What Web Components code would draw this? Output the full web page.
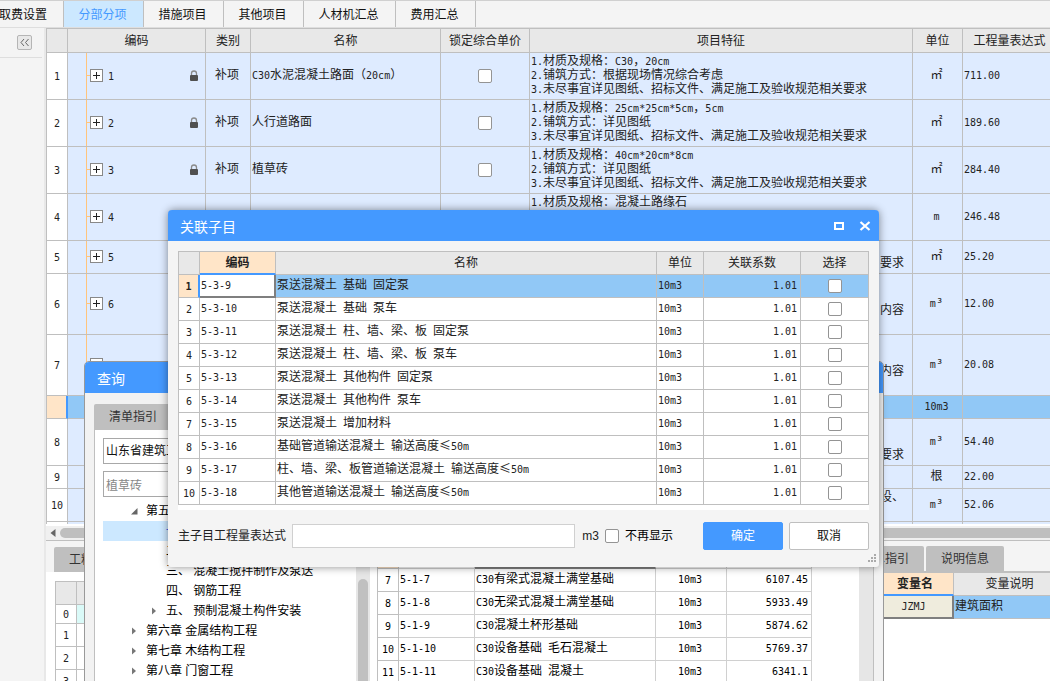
<!DOCTYPE html>
<html lang="zh-CN">
<head>
<meta charset="utf-8">
<meta name="viewport" content="width=device-width, initial-scale=1">
<title>工程计价 - 分部分项</title>
<style>
html, body { margin: 0; height: 100%; overflow: hidden; }
body {
  font-family: "Liberation Sans", "Noto Sans CJK SC", sans-serif;
  font-size: 12px; line-height: 14px; color: #222; background: #f4f4f4;
  --accent: #4499ff; --line: #bfbfbf; --head: #e8e8e8; --current: #ffe5c8;
  --picked: #91c8f6; --tint: #deebff; --surface: #f4f4f4;
}
</style>
</head>
<body>
<app-shell>
  <app-tabs slot="tabs"></app-tabs>
  <side-rail slot="rail"></side-rail>
  <bill-grid slot="grid"></bill-grid>
  <detail-pane slot="detail"></detail-pane>
  <resource-pane slot="resource"></resource-pane>
  <window-frame slot="windows" class="query" heading="查询"><guide-query></guide-query></window-frame>
  <window-frame slot="windows" class="linked" heading="关联子目" controls><linked-items></linked-items></window-frame>
</app-shell>

<script>
/* Styles shared by every data grid and form control. */
const BASE = `
:host, *, *::before, *::after { box-sizing: border-box; }
button, input, select { font: inherit; color: inherit; margin: 0; }
button { border: 0; background: none; padding: 0; }
table { border-collapse: separate; border-spacing: 0; table-layout: fixed; width: 100%;
  font-family: "DejaVu Sans Mono", "Noto Sans CJK SC", monospace; }
td, th { height: 23px; padding: 0 2px; border: 0 solid var(--line); border-width: 0 1px 1px 0;
  font-weight: 400; text-align: left; white-space: nowrap; overflow: hidden; vertical-align: middle; }
td { padding: 0 3px 2px 1px; }
td:has(input) { padding: 0; }
thead th { background: var(--head); text-align: center; }
tbody th { background: #fff; text-align: center; padding: 0; }
.c { text-align: center; } .r { text-align: right; }
.n { font-family: "DejaVu Sans Mono", monospace; font-size: 10px; line-height: 10px; }
.w { font-family: "Noto Sans CJK SC", sans-serif; line-height: 10px; }
.current { background: var(--current); font-weight: 700; }
input[type=checkbox] { appearance: none; display: block; width: 14px; height: 14px; margin: 0 auto;
  border: 1px solid #949494; border-radius: 2px; background: #fff; }
.tab { height: 25px; width: 78px; background: var(--line); color: #333; border-radius: 2px 2px 0 0; text-align: center; }
`;

/* Latin runs are set in the narrow grid face beside 12px Han characters; ≤ keeps its full Han width. */
const t = s => String(s).replace(/[\x20-\x7e]+/g, m => `<span class="n">${m}</span>`).replace(/≤/g, '<span class="w">≤</span>');
const cols = list => `<colgroup>${list.map(w => `<col${w ? ` style="width:${w}px"` : ''}>`).join('')}</colgroup>`;

const define = (name, css, markup) => customElements.define(name, class extends HTMLElement {
  connectedCallback() {
    if (this.shadowRoot) return;
    this.attachShadow({ mode: 'open' }).innerHTML =
      `<style>${BASE}${css}</style>${typeof markup === 'function' ? markup(this) : markup}`;
  }
});

define('app-shell', `
:host { display: flex; flex-direction: column; height: 100vh; position: relative; overflow: hidden; }
.body { flex: 1; display: flex; min-height: 0; }
main { flex: 1; min-width: 0; display: flex; flex-direction: column; }
.bottom { height: 140px; flex: none; display: flex; }
::slotted(bill-grid) { flex: 1; min-height: 0; }
::slotted(detail-pane) { flex: 1; min-width: 0; }
::slotted(resource-pane) { flex: none; width: 204px; }
::slotted(.query) { position: absolute; left: 84px; top: 361px; width: 800px; bottom: -40px; }
::slotted(.linked) { position: absolute; left: 168px; top: 210px; width: 711px; }
`, `<slot name="tabs"></slot>
<div class="body"><slot name="rail"></slot>
<main><slot name="grid"></slot><div class="bottom"><slot name="detail"></slot><slot name="resource"></slot></div></main></div>
<slot name="windows"></slot>`);

define('app-tabs', `
:host { display: block; border-top: 1px solid #d0d0d0; border-bottom: 1px solid #dedede; }
nav { display: flex; height: 26px; }
button { width: 80px; border-right: 1px solid var(--line); color: #111; padding: 2px 2px 0 0; white-space: nowrap; }
button.first { width: 64px; display: flex; align-items: center; justify-content: flex-end; padding-right: 16px; }
button.wide { width: 92px; }
button.on { background: #cce8ff; color: var(--accent); padding: 1px 2px 0 0; }
`, `<nav><button class="first">取费设置</button><button class="on" aria-current="page">分部分项</button><button>措施项目</button><button>其他项目</button><button class="wide">人材机汇总</button><button>费用汇总</button></nav>`);

define('side-rail', `
:host { display: flex; flex: none; width: 46px; border-right: 2px solid #e8e8e8; }
div { width: 42px; height: 30px; border-bottom: 1px solid #dedede; padding: 7px 0 0 17px; }
button { display: block; width: 15px; height: 15px; border: 1px solid #b5b5b5; border-radius: 2px; background: var(--head); }
svg { display: block; }
`, `<div><button aria-label="收起"><svg width="13" height="13" fill="none" stroke="#666"><path d="M6 3L3 6.500L6 10M10.500 3L7.500 6.500L10.500 10"/></svg></button></div>`);

const LOCK = `<svg class="lock" width="10" height="12" viewBox="0 0 10 12"><path d="M2.500 6V3.500a2.500 2.500 0 0 1 5 0V6" fill="none" stroke="#8a8a8a" stroke-width="1.300"/><rect x="1" y="5" width="8" height="6" rx="1" fill="#505050"/></svg>`;
const SPEC = '未尽事宜详见图纸、招标文件、满足施工及验收规范相关要求';
const BILL = [
  { no: 1, h: 3, name: 'C30水泥混凝土路面（20cm）', spec: ['1.材质及规格：C30，20cm', '2.铺筑方式：根据现场情况综合考虑', '3.' + SPEC], unit: '㎡', qty: '711.00' },
  { no: 2, h: 3, name: '人行道路面', spec: ['1.材质及规格：25cm*25cm*5cm，5cm', '2.铺筑方式：详见图纸', '3.' + SPEC], unit: '㎡', qty: '189.60' },
  { no: 3, h: 3, name: '植草砖', spec: ['1.材质及规格：40cm*20cm*8cm', '2.铺筑方式：详见图纸', '3.' + SPEC], unit: '㎡', qty: '284.40' },
  { no: 4, h: 3, spec: ['1.材质及规格：混凝土路缘石', '', ''], unit: 'm', qty: '246.48' },
  { no: 5, h: 2, tail: ['', '要求'], unit: '㎡', qty: '25.20' },
  { no: 6, h: 4, tail: ['', '', '内容', ''], unit: 'm³', qty: '12.00' },
  { no: 7, h: 4, tail: ['', '', '内容', ''], unit: 'm³', qty: '20.08' },
  { no: '', h: 1, unit: '10m3', qty: '' },
  { no: 8, h: 3, tail: ['', '', '要求'], unit: 'm³', qty: '54.40' },
  { no: 9, h: 1, unit: '根', qty: '22.00' },
  { no: 10, h: 2, tail: ['设、', ''], unit: 'm³', qty: '52.06' },
  { no: '', h: 2, unit: '', qty: '', rest: true }
];
const billRow = b => {
  const lines = b.spec || b.tail || [];
  const text = lines.map(l => `<div class="line">${t(l)}</div>`).join('');
  const picked = !b.no && !b.rest;
  return `<tr class="h${b.h}${picked ? ' picked' : ''}"><th>${t(b.no)}</th>
<td class="code">${b.no ? `<div class="node"><i></i><button aria-label="展开"><svg width="11" height="11" stroke="#222"><path d="M2 5.500H9M5.500 2V9"/></svg></button><span>${t(b.no)}</span>${LOCK}</div>` : ''}</td>
<td class="c">${b.name ? '补项' : ''}</td><td>${b.name ? t(b.name) : ''}</td>
<td>${b.name ? `<input type="checkbox" aria-label="锁定综合单价 ${b.no}">` : ''}</td>
<td class="${b.tail ? 'tail' : ''}">${text}</td><td class="c">${t(b.unit)}</td><td>${t(b.qty)}</td></tr>`;
};
define('bill-grid', `
:host { display: flex; flex-direction: column; background: #fff; }
.view { flex: 1; min-height: 0; overflow: hidden; border: solid var(--line); border-width: 1px 0 0 1px; margin-bottom: 2px; }
table { width: calc(100% + 7px); }
thead th { height: 24px; }
td { background: var(--tint); }
.h1 > * { height: 23px; } .h2 > * { height: 33px; } .h3 > * { height: 47px; } .h4 > * { height: 61px; }
.line { height: 14px; }
td.tail { text-align: right; padding-right: 8px; }
.picked td { background: var(--picked); }
.picked th { background: var(--current); border-right: 2px solid var(--accent); }
td.code { padding: 0 6px 1px 18px; background: linear-gradient(#ffc47c, #ffc47c) 18px 0 / 1px 100% no-repeat var(--tint); }
.picked td.code { background: var(--picked); }
.node { display: flex; align-items: center; }
.node i { width: 4px; height: 1px; background: #ffc47c; }
.node button { width: 13px; height: 13px; border: 1px solid #888; background: #fff; margin-right: 5px; }
.node button svg { display: block; }
.lock { margin-left: auto; display: block; }
.bar { height: 14px; flex: none; background: #f0f0f0; display: flex; align-items: center; gap: 4px; padding-left: 4px; }
.bar b { flex: 1; height: 10px; border-radius: 5px 0 0 5px; background: var(--line); }
.bar svg { display: block; }
.edge { height: 1px; flex: none; background: var(--line); }
`, `<div class="view"><table>${cols([21, 138, 45, 190, 89, 0, 50, 94])}
<thead><tr><th></th><th>编码</th><th>类别</th><th>名称</th><th>锁定综合单价</th><th>项目特征</th><th>单位</th><th>工程量表达式</th></tr></thead>
<tbody>${BILL.map(billRow).join('')}</tbody></table></div>
<div class="bar"><svg width="6" height="8" fill="#666"><path d="M5.500 0V8L0.500 4Z"/></svg><b></b></div><div class="edge"></div>`);

define('detail-pane', `
:host { display: flex; flex-direction: column; background: #fff; }
.tabs { background: var(--surface); padding: 6px 0 0 8px; }
.tab { display: block; width: 90px; }
.view { flex: 1; padding: 9px 0 0 9px; overflow: hidden; }
table { border: solid var(--line); border-width: 1px 0 0 1px; }
.zero > * { height: 19px; } .zero td { background: #dafaf8; }
`, `<div class="tabs"><button class="tab">工料机显示</button></div>
<div class="view"><table>${cols([21, 0])}<thead><tr><th></th><th></th></tr></thead><tbody>
<tr class="zero"><th>${t(0)}</th><td></td></tr>${[1, 2, 3].map(n => `<tr><th>${t(n)}</th><td></td></tr>`).join('')}</tbody></table></div>`);

define('resource-pane', `
:host { display: flex; flex-direction: column; background: #fff; }
.tabs { display: flex; gap: 2px; background: var(--surface); padding-top: 5px; border-bottom: 2px solid var(--line); }
.view { flex: 1; overflow: hidden; }
table { width: calc(100% + 16px); }
thead th.current { background: var(--current); border-bottom: 2px solid var(--accent); }
td.name { background: #efecdd; border-right: 2px solid #7f7f7f; border-bottom: 2px solid #7f7f7f; text-align: center; }
td.picked { background: var(--picked); }
`, `<div class="tabs"><button class="tab">清单指引</button><button class="tab">说明信息</button></div>
<div class="view"><table>${cols([31, 77, 0])}<thead><tr><th></th><th class="current">变量名</th><th>变量说明</th></tr></thead>
<tbody><tr><th>${t(1)}</th><td class="name">${t('JZMJ')}</td><td class="picked">建筑面积</td></tr></tbody></table></div>`);

define('window-frame', `
:host { display: flex; flex-direction: column; background: var(--surface); border-radius: 5px 5px 3px 3px; }
:host([controls]) { box-shadow: 0 0 9px rgba(0,0,0,.45); }
:host(:not([controls])) { border: 1px solid #999; }
header { display: flex; align-items: center; flex: none; height: 31px; padding: 2px 8px 0 12px; background: var(--accent);
  color: #fff; border-radius: 4px 4px 0 0; }
h2 { margin: 0 auto 0 0; font-size: 14px; line-height: 20px; font-weight: 400; }
.tools { display: flex; gap: 14px; padding-bottom: 2px; }
button { width: 12px; height: 12px; }
svg { display: block; }
::slotted(*) { flex: 1; min-height: 0; }
`, el => `<header><h2>${el.getAttribute('heading')}</h2>${el.hasAttribute('controls') ? `<div class="tools">
<button aria-label="最大化"><svg width="12" height="12" fill="none" stroke="#fff" stroke-width="2"><path d="M2 3H10V9H2Z"/></svg></button>
<button aria-label="关闭"><svg width="12" height="12" fill="none" stroke="#fff" stroke-width="2.200"><path d="M1.500 2L10.500 10M10.500 2L1.500 10"/></svg></button></div>` : ''}</header><slot></slot>`);

define('chapter-tree', `
:host { display: block; }
ul { list-style: none; margin: 0; padding: 0; color: #000; }
li { display: flex; align-items: center; height: 20px; padding-left: 27px; white-space: nowrap; }
li.sub { padding-left: 47px; }
li.on { background: #cce8ff; color: #4466ee; }
svg { display: block; width: 8px; height: 8px; margin-right: 8px; }
`, () => {
  const closed = '<svg fill="#777"><path d="M2 0.500V7.500L6 4Z"/></svg>', open = '<svg fill="#666"><path d="M7.500 1V7.500H1Z"/></svg>';
  return `<ul>${[
    ['', '第五章 钢筋及混凝土工程', open], ['sub on', '一、', '<svg></svg>'], ['sub', '二、', '<svg></svg>'],
    ['sub', '三、 混凝土搅拌制作及泵送', '<svg></svg>'], ['sub', '四、 钢筋工程', '<svg></svg>'], ['sub', '五、 预制混凝土构件安装', closed],
    ['', '第六章 金属结构工程', closed], ['', '第七章 木结构工程', closed], ['', '第八章 门窗工程', closed]
  ].map(([c, s, i]) => `<li class="${c}">${i}${s}</li>`).join('')}</ul>`;
});

const NORMS = [
  [6, '', '', '', ''], [7, '5-1-7', 'C30有梁式混凝土满堂基础', '10m3', '6107.45'],
  [8, '5-1-8', 'C30无梁式混凝土满堂基础', '10m3', '5933.49'], [9, '5-1-9', 'C30混凝土杯形基础', '10m3', '5874.62'],
  [10, '5-1-10', 'C30设备基础 毛石混凝土', '10m3', '5769.37'], [11, '5-1-11', 'C30设备基础 混凝土', '10m3', '6341.1']
];
define('guide-query', `
:host { display: flex; flex-direction: column; padding: 11px 9px 0; background: #f2f2f2; }
.tab { flex: none; height: 26px; }
.split { flex: 1; min-height: 0; display: flex; background: #fff; border: solid var(--line); border-width: 0 1px 0 1px; }
.left { flex: none; width: 275px; padding: 8px 0 0 8px; display: flex; flex-direction: column; }
select, input { display: block; width: 100%; height: 26px; border: 1px solid #a8a8a8; background: #fff; padding: 0 2px; border-radius: 0; appearance: none; color: #111; flex: none; }
input { margin: 7px 0 4px; color: #888; }
.scroll { flex: 1; min-height: 0; display: flex; overflow: hidden; }
chapter-tree { flex: 1; }
.track { flex: none; width: 14px; background: #e6e6e6; padding: 78px 2px 0; }
.track b { display: block; height: 100%; background: #c0c0c0; border-radius: 5px; }
.list { flex: 1; min-width: 0; overflow: hidden; margin-left: 7px; padding: 92px 47px 0 0; }
table { border: solid var(--line); border-width: 1px 0 0 1px; color: #000; }
td { border-color: #d0d0d0; }
.on th { background: var(--current); } .on td.name { border-bottom: 2px solid #7f7f7f; }
.track.main { padding: 0; }
`, `<button class="tab">清单指引</button><div class="split"><div class="left">
<select aria-label="定额库"><option>山东省建筑工程消耗量定额</option></select><input aria-label="搜索" value="植草砖">
<div class="scroll"><chapter-tree></chapter-tree><div class="track"><b></b></div></div></div>
<div class="list"><table>${cols([21, 76, 0, 71, 85])}<thead><tr><th></th><th>编码</th><th>名称</th><th>单位</th><th>单价</th></tr></thead><tbody>
${NORMS.map((r, i) => `<tr class="${i ? '' : 'on'}"><th>${t(r[0])}</th><td>${t(r[1])}</td><td class="name">${t(r[2])}</td><td class="c">${t(r[3])}</td><td class="r">${t(r[4])}</td></tr>`).join('')}
</tbody></table></div><div class="track main"></div></div>`);

const LINKED = ['泵送混凝土 基础 固定泵', '泵送混凝土 基础 泵车', '泵送混凝土 柱、墙、梁、板 固定泵', '泵送混凝土 柱、墙、梁、板 泵车',
  '泵送混凝土 其他构件 固定泵', '泵送混凝土 其他构件 泵车', '泵送混凝土 增加材料', '基础管道输送混凝土 输送高度≤50m',
  '柱、墙、梁、板管道输送混凝土 输送高度≤50m', '其他管道输送混凝土 输送高度≤50m'];
define('linked-items', `
:host { display: block; padding: 10px 10px 4px; }
.view { background: #fff; padding-bottom: 5px; }
table { border: solid var(--line); border-width: 1px 0 0 1px; }
thead th { height: 23px; }
thead th.current { background: var(--current); border-bottom: 2px solid var(--accent); }
.on th { background: var(--current); font-weight: 700; border-right: 2px solid var(--accent); }
.on td { background: var(--picked); }
.on td.code { background: #fff; border-right: 2px solid #7f7f7f; border-bottom: 2px solid #7f7f7f; }
form { display: flex; align-items: center; padding-top: 12px; }
.expr { flex: 1; min-width: 0; height: 24px; border: 1px solid #d0d0d0; background: #fff; margin: 0 7px 0 6px; }
form input[type=checkbox] { margin: 0 6px 0 6px; }
.again { margin-right: 30px; color: #000; }
form button { width: 80px; height: 28px; border: 1px solid var(--line); border-radius: 2px; background: #fff; color: #111; }
form button.ok { background: var(--accent); border-color: var(--accent); color: #fff; margin-right: 6px; }
.grip { display: block; margin: 4px -8px 0 auto; }
`, `<div class="view"><table>${cols([21, 76, 0, 47, 97, 68])}<thead><tr><th></th><th class="current">编码</th><th>名称</th><th>单位</th><th>关联系数</th><th>选择</th></tr></thead>
<tbody>${LINKED.map((s, i) => `<tr class="${i ? '' : 'on'}"><th>${t(i + 1)}</th><td class="code">${t('5-3-' + (i + 9))}</td><td>${t(s)}</td><td>${t('10m3')}</td><td class="r">${t('1.01')}</td><td><input type="checkbox" aria-label="选择 ${i + 1}"></td></tr>`).join('')}</tbody></table></div>
<form><label for="expr">主子目工程量表达式</label><input class="expr" id="expr"><span>m3</span><input type="checkbox" id="again"><label class="again" for="again">不再显示</label><button type="button" class="ok">确定</button><button type="button">取消</button></form>
<svg class="grip" width="9" height="9" fill="#aaa"><path d="M6 0h2v2H6zM3 3h2v2H3zM6 3h2v2H6zM0 6h2v2H0zM3 6h2v2H3zM6 6h2v2H6z"/></svg>`);
</script>
</body>
</html>
